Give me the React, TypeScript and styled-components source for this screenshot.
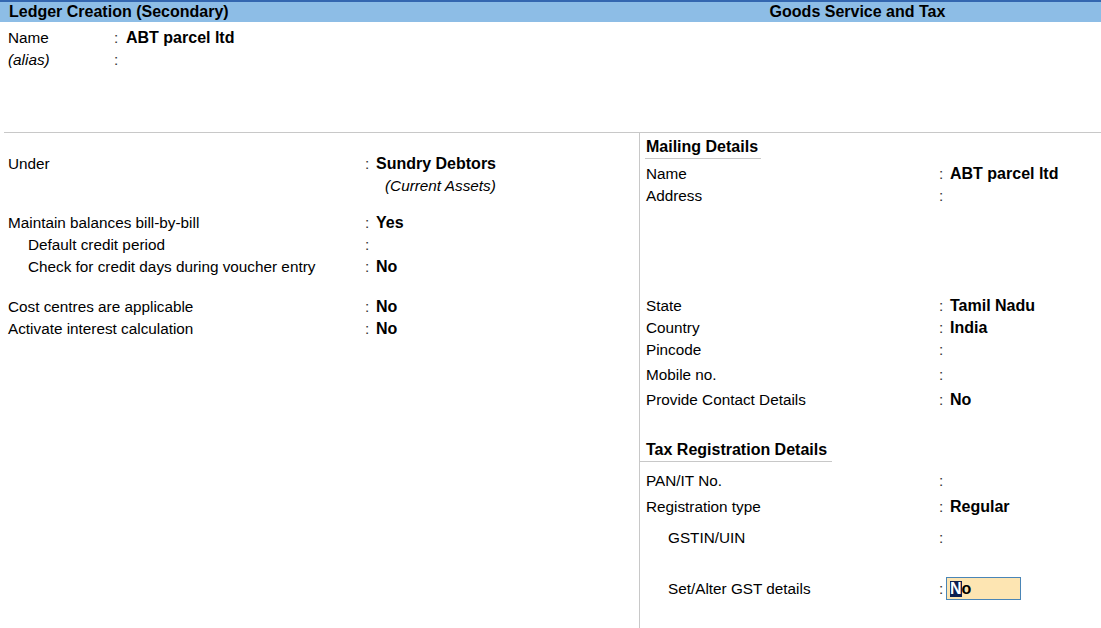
import styled, { createGlobalStyle } from "styled-components";

const GlobalStyle = createGlobalStyle`
  html, body {
    margin: 0;
    padding: 0;
    background: #ffffff;
  }
  body {
    font-family: "Liberation Sans", Arial, sans-serif;
    color: #000000;
  }
`;

type Field = {
  label?: string;
  value?: string;
  italic?: boolean;
  indent?: number;
  mt?: number;
  noColon?: boolean;
};

const topFields: Field[] = [
  { label: "Name", value: "ABT parcel ltd" },
  { label: "(alias)", italic: true },
];

const leftFields: Field[] = [
  { label: "Under", value: "Sundry Debtors" },
  { value: "(Current Assets)", noColon: true },
  { label: "Maintain balances bill-by-bill", value: "Yes", mt: 15 },
  { label: "Default credit period", indent: 20 },
  { label: "Check for credit days during voucher entry", value: "No", indent: 20 },
  { label: "Cost centres are applicable", value: "No", mt: 18 },
  { label: "Activate interest calculation", value: "No" },
];

// right pane columns
const RL = 293;
const RC = 11;

export default function App() {
  return (
    <Page>
      <GlobalStyle />
      <TitleBar>
        <TitleLeft>Ledger Creation (Secondary)</TitleLeft>
        <TitleRight>Goods Service and Tax</TitleRight>
      </TitleBar>

      <TopSection>
        {topFields.map((f) => (
          <Row key={f.label} $labelWidth={106} $colonWidth={12}>
            <Label $italic={f.italic}>{f.label}</Label>
            <Colon>:</Colon>
            <Value>{f.value}</Value>
          </Row>
        ))}
      </TopSection>

      <Body>
        <LeftPane>
          {leftFields.map((f, i) => (
            <Row key={i} $labelWidth={357} $colonWidth={11} $mt={f.mt}>
              <Label $indent={f.indent}>{f.label}</Label>
              <Colon>{f.noColon ? "" : ":"}</Colon>
              {f.noColon ? (
                <SubValue>{f.value}</SubValue>
              ) : (
                <Value>{f.value}</Value>
              )}
            </Row>
          ))}
        </LeftPane>

        <RightPane>
          <Heading $mt={1} $pt={2} $pl={1} $pr={3}>Mailing Details</Heading>
          <Row $labelWidth={RL} $colonWidth={RC} $mt={4}>
            <Label>Name</Label>
            <Colon>:</Colon>
            <Value>ABT parcel ltd</Value>
          </Row>
          <Row $labelWidth={RL} $colonWidth={RC}>
            <Label>Address</Label>
            <Colon>:</Colon>
            <Value />
          </Row>
          <Row $labelWidth={RL} $colonWidth={RC} $mt={88}>
            <Label>State</Label>
            <Colon>:</Colon>
            <Value>Tamil Nadu</Value>
          </Row>
          <Row $labelWidth={RL} $colonWidth={RC}>
            <Label>Country</Label>
            <Colon>:</Colon>
            <Value>India</Value>
          </Row>
          <Row $labelWidth={RL} $colonWidth={RC}>
            <Label>Pincode</Label>
            <Colon>:</Colon>
            <Value />
          </Row>
          <Row $labelWidth={RL} $colonWidth={RC} $mt={3}>
            <Label>Mobile no.</Label>
            <Colon>:</Colon>
            <Value />
          </Row>
          <Row $labelWidth={RL} $colonWidth={RC} $mt={3}>
            <Label>Provide Contact Details</Label>
            <Colon>:</Colon>
            <Value>No</Value>
          </Row>

          <Heading $mt={28} $pt={0} $ml={-6} $pl={6} $pr={5}>
            Tax Registration Details
          </Heading>
          <Row $labelWidth={RL} $colonWidth={RC} $mt={8}>
            <Label>PAN/IT No.</Label>
            <Colon>:</Colon>
            <Value />
          </Row>
          <Row $labelWidth={RL} $colonWidth={RC} $mt={4}>
            <Label>Registration type</Label>
            <Colon>:</Colon>
            <Value>Regular</Value>
          </Row>
          <Row $labelWidth={RL} $colonWidth={RC} $mt={9}>
            <Label $indent={22}>GSTIN/UIN</Label>
            <Colon>:</Colon>
            <Value />
          </Row>
          <Row $labelWidth={RL} $colonWidth={RC} $mt={28}>
            <Label $indent={22}>Set/Alter GST details</Label>
            <Colon>:</Colon>
            <InputBox>
              <Cursor>N</Cursor>o
            </InputBox>
          </Row>
        </RightPane>
      </Body>
    </Page>
  );
}

const Page = styled.div`
  width: 1101px;
  height: 628px;
  overflow: hidden;
  display: flex;
  flex-direction: column;
`;

const TitleBar = styled.div`
  display: grid;
  grid-template-columns: 640px 1fr;
  height: 20px;
  border-top: 2px solid #3467b0;
  background: #8dbde6;
  font-size: 16px;
  font-weight: 700;
  line-height: 20px;
`;

const TitleLeft = styled.div`
  padding-left: 9px;
`;

const TitleRight = styled.div`
  text-align: center;
  padding-right: 26px;
`;

const TopSection = styled.div`
  height: 110px;
  padding: 5px 0 0 8px;
  box-sizing: border-box;
`;

const Body = styled.div`
  flex: 1;
  display: grid;
  grid-template-columns: 635px 1fr;
  margin-left: 4px;
  border-top: 1px solid #c8c8c8;
`;

const LeftPane = styled.div`
  padding: 20px 0 0 4px;
`;

const RightPane = styled.div`
  border-left: 1px solid #c8c8c8;
  padding-left: 6px;
  display: flex;
  flex-direction: column;
  align-items: flex-start;
`;

const Heading = styled.div<{
  $mt?: number;
  $pt?: number;
  $ml?: number;
  $pl?: number;
  $pr?: number;
}>`
  margin-top: ${(p) => p.$mt ?? 2}px;
  margin-left: ${(p) => p.$ml ?? -1}px;
  padding-top: ${(p) => p.$pt ?? 1}px;
  padding-left: ${(p) => p.$pl ?? 0}px;
  padding-right: ${(p) => p.$pr ?? 0}px;
  font-size: 16px;
  font-weight: 700;
  line-height: 22px;
  border-bottom: 1px solid #c8c8c8;
`;

const Row = styled.div<{ $labelWidth: number; $colonWidth: number; $mt?: number }>`
  display: grid;
  grid-template-columns: ${(p) => p.$labelWidth}px ${(p) => p.$colonWidth}px auto;
  align-items: center;
  height: 22px;
  margin-top: ${(p) => p.$mt ?? 0}px;
  font-size: 15.3px;
  line-height: 22px;
  white-space: nowrap;
`;

const Label = styled.span<{ $italic?: boolean; $indent?: number }>`
  font-style: ${(p) => (p.$italic ? "italic" : "normal")};
  padding-left: ${(p) => p.$indent ?? 0}px;
`;

const Colon = styled.span`
  color: #333;
`;

const Value = styled.span`
  font-size: 16px;
  font-weight: 700;
`;

const SubValue = styled.span`
  padding-left: 9px;
  font-style: italic;
`;

const InputBox = styled.span`
  display: inline-flex;
  align-items: center;
  margin-left: -4px;
  width: 75px;
  height: 23px;
  box-sizing: border-box;
  padding-left: 3px;
  background: #fde5b2;
  border: 1px solid #4a85b6;
  font-size: 16px;
  font-weight: 700;
`;

const Cursor = styled.span`
  background: #0c1f4f;
  color: #ffffff;
  line-height: 16px;
`;
